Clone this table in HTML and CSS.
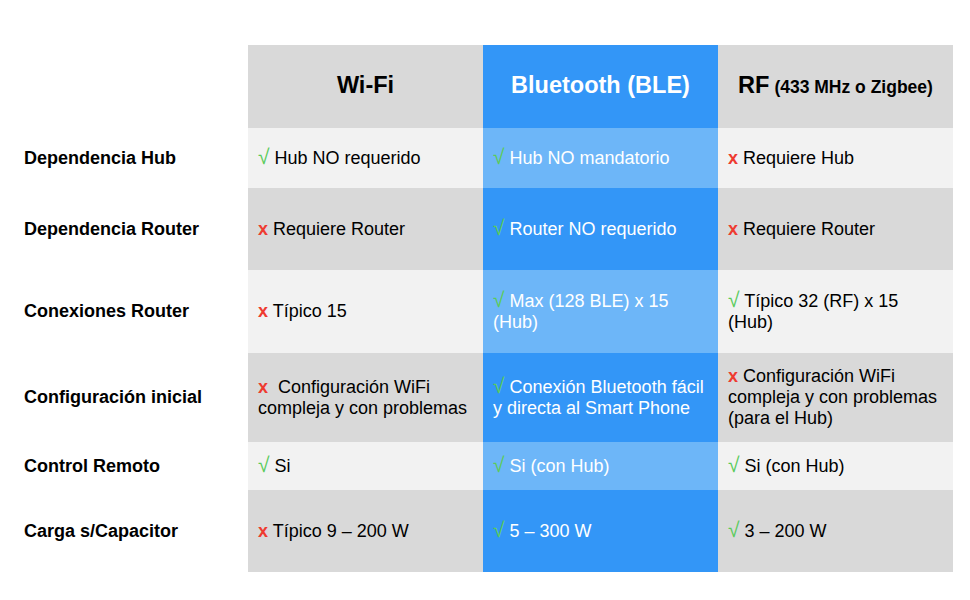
FILE: index.html
```html
<!DOCTYPE html>
<html lang="es">
<head>
<meta charset="utf-8">
<title>Comparativa</title>
<link rel="stylesheet" href="styles.css">
</head>
<body>
<div class="table">
  <div class="label"></div>
  <div class="cell hd gray"><span class="title">Wi-Fi</span></div>
  <div class="cell hd blue"><span class="title">Bluetooth (BLE)</span></div>
  <div class="cell hd gray"><span class="title">RF</span><span class="sub">(433 MHz o Zigbee)</span></div>

  <div class="label">Dependencia Hub</div>
  <div class="cell light"><p class="txt"><span class="ok">√</span> Hub NO requerido</p></div>
  <div class="cell lblue"><p class="txt"><span class="ok">√</span> Hub NO mandatorio</p></div>
  <div class="cell light"><p class="txt"><span class="no">x</span> Requiere Hub</p></div>

  <div class="label">Dependencia Router</div>
  <div class="cell gray"><p class="txt"><span class="no">x</span> Requiere Router</p></div>
  <div class="cell blue"><p class="txt"><span class="ok">√</span> Router NO requerido</p></div>
  <div class="cell gray"><p class="txt"><span class="no">x</span> Requiere Router</p></div>

  <div class="label">Conexiones Router</div>
  <div class="cell light"><p class="txt"><span class="no">x</span> Típico 15</p></div>
  <div class="cell lblue"><p class="txt"><span class="ok">√</span> Max (128 BLE) x 15 (Hub)</p></div>
  <div class="cell light"><p class="txt"><span class="ok">√</span> Típico 32 (RF) x 15 (Hub)</p></div>

  <div class="label">Configuración inicial</div>
  <div class="cell gray"><p class="txt"><span class="no">x</span>&nbsp; Configuración WiFi compleja y con problemas</p></div>
  <div class="cell blue"><p class="txt"><span class="ok">√</span> Conexión Bluetooth fácil y directa al Smart Phone</p></div>
  <div class="cell gray"><p class="txt"><span class="no">x</span> Configuración WiFi compleja y con problemas (para el Hub)</p></div>

  <div class="label">Control Remoto</div>
  <div class="cell light"><p class="txt"><span class="ok">√</span> Si</p></div>
  <div class="cell lblue"><p class="txt"><span class="ok">√</span> Si (con Hub)</p></div>
  <div class="cell light"><p class="txt"><span class="ok">√</span> Si (con Hub)</p></div>

  <div class="label">Carga s/Capacitor</div>
  <div class="cell gray"><p class="txt"><span class="no">x</span> Típico 9 – 200 W</p></div>
  <div class="cell blue"><p class="txt"><span class="ok">√</span> 5 – 300 W</p></div>
  <div class="cell gray"><p class="txt"><span class="ok">√</span> 3 – 200 W</p></div>
</div>
</body>
</html>
```

FILE: styles.css
```css
html, body {
  margin: 0;
  padding: 0;
  background: #ffffff;
}
body {
  font-family: "Liberation Sans", Arial, Helvetica, sans-serif;
  color: #000;
}
.table {
  display: grid;
  grid-template-columns: 248px 235px 235px 235px;
  grid-template-rows: 83px 60px 82px 83px 89px 48px 82px;
  padding-top: 45px;
}
.label {
  display: flex;
  align-items: center;
  padding-left: 24px;
  font-weight: bold;
  font-size: 18px;
  line-height: 21px;
  background: #fff;
}
.cell {
  display: flex;
  align-items: center;
  padding: 0 12px 0 10px;
  font-size: 18px;
  line-height: 21px;
}
.txt {
  margin: 0;
}
.cell.hd {
  justify-content: center;
  padding: 0;
  font-weight: bold;
  white-space: nowrap;
  align-items: baseline;
  padding-top: 30px;
}
.cell.hd .title {
  font-size: 23.5px;
}
.cell.hd .sub {
  font-size: 17.5px;
  margin-left: 5px;
}
.gray { background: #d9d9d9; }
.light { background: #f2f2f2; }
.blue { background: #3396f7; color: #fff; }
.lblue { background: #6db6f8; color: #fff; }

.ok {
  color: #5bcb5b;
  font-size: 21px;
  line-height: 0;
}
.no {
  color: #ee3b30;
  font-weight: bold;
  line-height: 0;
}
```
